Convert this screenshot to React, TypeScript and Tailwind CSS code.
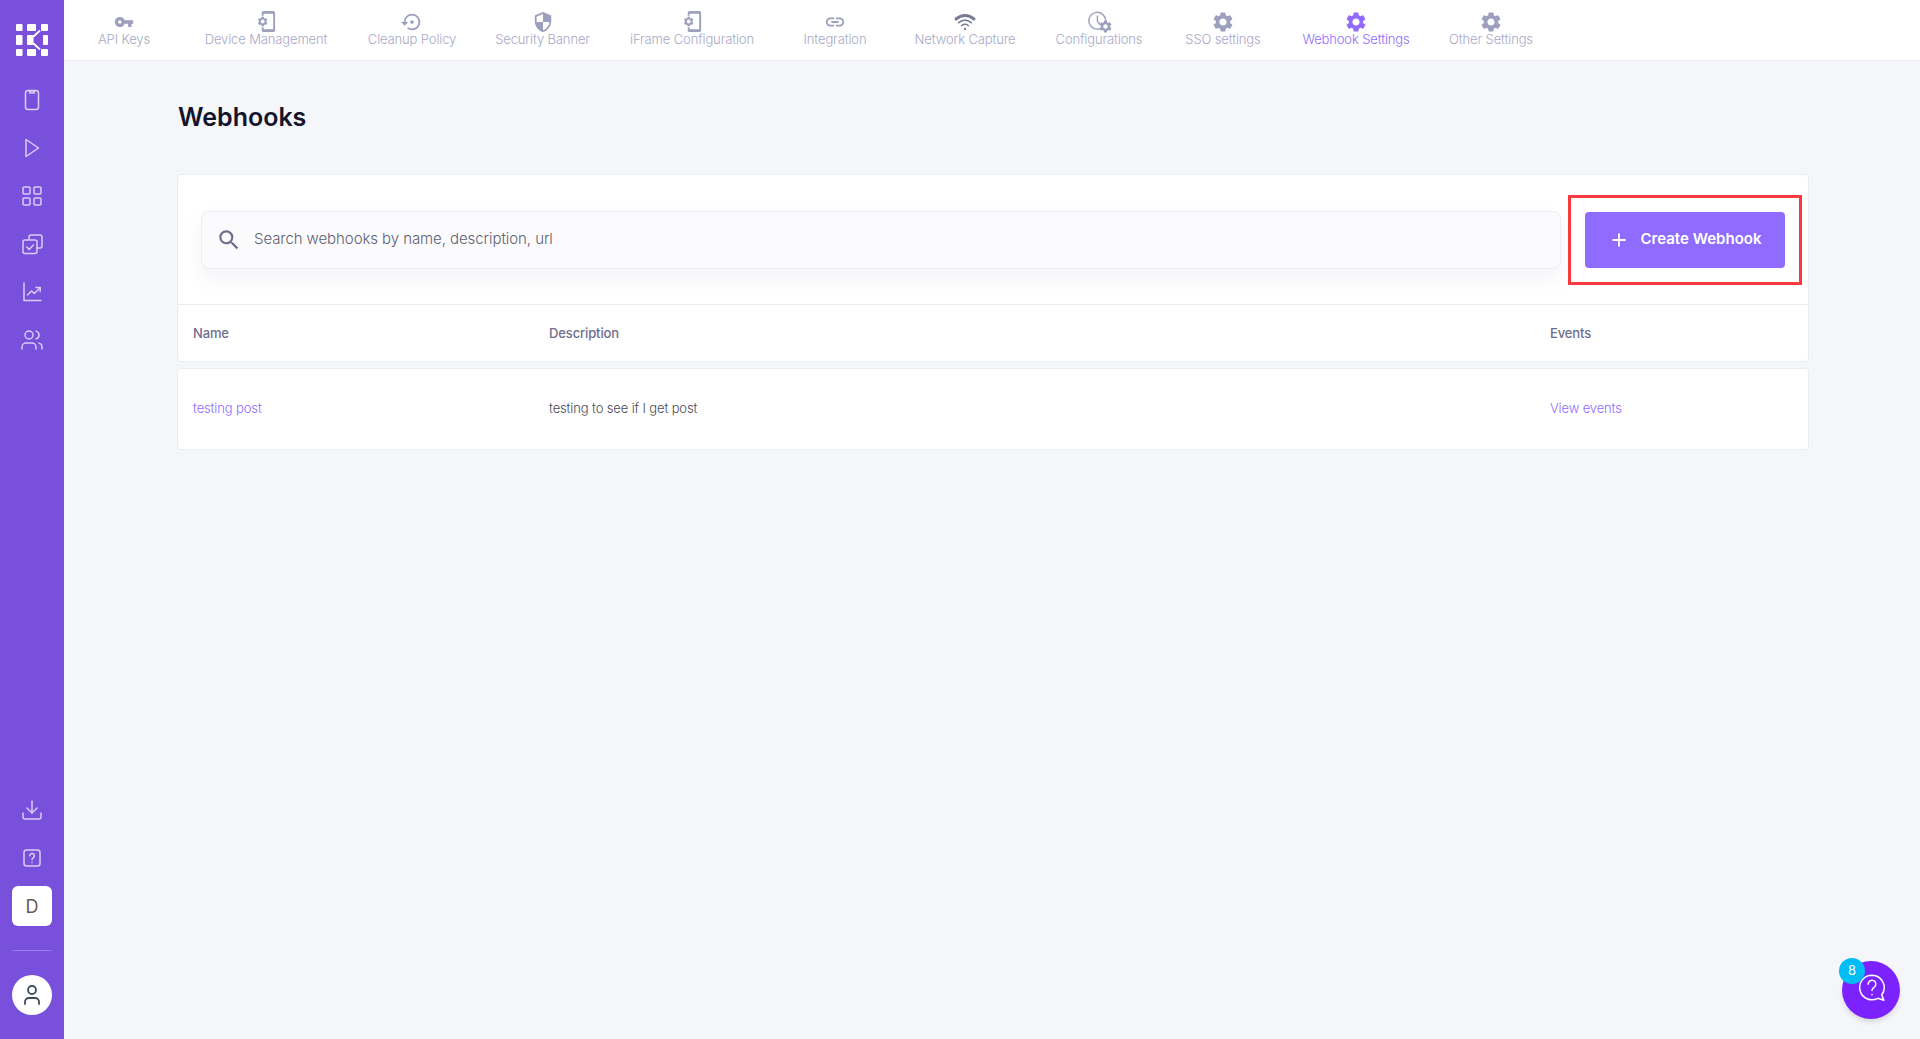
import { Download, LayoutGrid, Plus, User, Users } from 'lucide-react';
import {
  MdLink,
  MdOutlinePhonelinkSetup,
  MdSearch,
  MdSecurity,
  MdSettings,
  MdSettingsBackupRestore,
  MdVpnKey,
} from 'react-icons/md';
import type { ReactNode } from 'react';

const font = "font-['Inter','Liberation_Sans',sans-serif]";

function ClockGear() {
  return (
    <div className="relative h-6 w-6">
      <svg viewBox="0 0 24 24" className="h-6 w-6 text-[#9c9fbd]" fill="none" stroke="currentColor" strokeWidth="1.4">
        <path d="M13 18.6A8.4 8.4 0 1 1 18.6 10.6M10.4 5.5v6l2.8 3.2" />
      </svg>
      <MdSettings className="absolute bottom-0 -right-0.5 h-[15px] w-[15px] text-[#9c9fbd]" />
    </div>
  );
}

function WifiIcon() {
  return (
    <svg viewBox="0 0 24 24" className="h-6 w-6 text-[#777b95]" fill="none" stroke="currentColor" strokeLinecap="round">
      <path d="M3 9C8.5 4.4 15.5 4.4 21 9" strokeWidth="3" />
      <path d="M5.8 12.6c3.8-3 8.6-3 12.4 0" strokeWidth="1.8" />
      <path d="M8.6 15.6c2.1-1.6 4.7-1.6 6.8 0" strokeWidth="1.5" />
      <circle cx="12" cy="19" r="1.2" fill="currentColor" stroke="none" />
    </svg>
  );
}

const tabs: { label: string; width: string; icon: ReactNode; active?: boolean }[] = [
  { label: 'API Keys', width: 'w-[120px]', icon: <MdVpnKey className="h-5 w-5 text-[#9c9fbd]" /> },
  { label: 'Device Management', width: 'w-[164px]', icon: <MdOutlinePhonelinkSetup className="h-[23px] w-[23px] text-[#9c9fbd]" /> },
  { label: 'Cleanup Policy', width: 'w-[128px]', icon: <MdSettingsBackupRestore className="h-[22px] w-[22px] text-[#9c9fbd]" /> },
  { label: 'Security Banner', width: 'w-[133px]', icon: <MdSecurity className="h-[22px] w-[22px] text-[#9c9fbd]" /> },
  { label: 'iFrame Configuration', width: 'w-[166px]', icon: <MdOutlinePhonelinkSetup className="h-[23px] w-[23px] text-[#9c9fbd]" /> },
  { label: 'Integration', width: 'w-[120px]', icon: <MdLink className="h-[22px] w-[22px] text-[#9c9fbd]" /> },
  { label: 'Network Capture', width: 'w-[140px]', icon: <WifiIcon /> },
  { label: 'Configurations', width: 'w-[128px]', icon: <ClockGear /> },
  { label: 'SSO settings', width: 'w-[120px]', icon: <MdSettings className="h-6 w-6 text-[#9c9fbd]" /> },
  { label: 'Webhook Settings', width: 'w-[146px]', icon: <MdSettings className="h-6 w-6 text-[#8f6bff]" />, active: true },
  { label: 'Other Settings', width: 'w-[124px]', icon: <MdSettings className="h-6 w-6 text-[#9c9fbd]" /> },
];

function PhoneIcon() {
  return (
    <svg viewBox="0 0 24 24" className="h-6 w-6" fill="none" stroke="currentColor" strokeWidth="1.5">
      <rect x="5.5" y="2.5" width="13" height="19" rx="2.5" />
      <path d="M9.5 3h5v1.2a.8.8 0 0 1-.8.8h-3.4a.8.8 0 0 1-.8-.8z" />
    </svg>
  );
}

function PlayIcon() {
  return (
    <svg viewBox="0 0 24 24" className="h-6 w-6" fill="none" stroke="currentColor" strokeWidth="1.5" strokeLinejoin="round">
      <path d="M6 3.5L18.5 12 6 20.5z" />
    </svg>
  );
}

function ChartIcon() {
  return (
    <svg viewBox="0 0 24 24" className="h-6 w-6" fill="none" stroke="currentColor" strokeWidth="1.5" strokeLinecap="round" strokeLinejoin="round">
      <path d="M4 3v17.5h17" />
      <path d="M7.5 15l4-4 2.8 2.5L20 8" />
      <path d="M16 7.5h4.2v4" />
    </svg>
  );
}

function CopyCheckIcon() {
  return (
    <svg viewBox="0 0 24 24" className="h-6 w-6" fill="none" stroke="currentColor" strokeWidth="1.5" strokeLinecap="round" strokeLinejoin="round">
      <path d="M9 7V5a2 2 0 0 1 2-2h9a2 2 0 0 1 2 2v9a2 2 0 0 1-2 2h-3" />
      <rect x="3" y="8" width="14" height="13.5" rx="2" />
      <path d="M6.8 15l2.4 2.4 4.2-4.4" />
    </svg>
  );
}

function HelpSquareIcon() {
  return (
    <svg viewBox="0 0 24 24" className="h-6 w-6" fill="none" stroke="currentColor" strokeWidth="1.5" strokeLinecap="round">
      <rect x="4" y="4" width="16" height="16" rx="2.5" />
      <path d="M9.8 9.8a2.3 2.3 0 1 1 3.6 1.9c-.8.5-1.4 1-1.4 2" />
      <path d="M12 16.4v.2" />
    </svg>
  );
}

function Logo() {
  return (
    <svg viewBox="0 0 32 32" className="h-8 w-8" fill="white">
      <rect x="0" y="0" width="6.5" height="7" rx="1" />
      <rect x="11" y="0" width="9" height="7" rx="1" />
      <rect x="25" y="0" width="7" height="7" rx="1" />
      <rect x="0" y="11" width="6.5" height="10" rx="1" />
      <path d="M11 12a1 1 0 0 1 1-1h7l-1.5 3v4l1.5 3h-7a1 1 0 0 1-1-1z" />
      <rect x="27" y="11" width="5" height="10" rx="1" />
      <rect x="0" y="25" width="6.5" height="7" rx="1" />
      <rect x="11" y="25" width="9" height="7" rx="1" />
      <rect x="25" y="25" width="7" height="7" rx="1" />
      <path d="M17.5 12.5L24 6.5M17.5 19.5l6.5 6" stroke="white" strokeWidth="1.8" fill="none" />
    </svg>
  );
}

function SideButton({ children }: { children: ReactNode }) {
  return <div className="flex h-12 w-16 items-center justify-center text-[#d9cdf6]">{children}</div>;
}

function Sidebar() {
  return (
    <aside className="flex h-full w-16 shrink-0 flex-col items-center bg-[#7950dc]">
      <div className="mt-6 mb-5">
        <Logo />
      </div>
      <div className="flex flex-col">
        <SideButton><PhoneIcon /></SideButton>
        <SideButton><PlayIcon /></SideButton>
        <SideButton><LayoutGrid className="h-6 w-6" strokeWidth={1.5} /></SideButton>
        <SideButton><CopyCheckIcon /></SideButton>
        <SideButton><ChartIcon /></SideButton>
        <SideButton><Users className="h-6 w-6" strokeWidth={1.5} /></SideButton>
      </div>
      <div className="mt-auto flex flex-col items-center">
        <SideButton><Download className="h-6 w-6" strokeWidth={1.5} /></SideButton>
        <SideButton><HelpSquareIcon /></SideButton>
        <div className={`mt-1 flex h-10 w-10 items-center justify-center rounded-md bg-white pt-px text-lg text-[#6b5a55] ${font}`}>D</div>
        <div className="mt-6 h-px w-10 bg-white/25" />
        <div className="mt-6 mb-6 flex h-10 w-10 items-center justify-center rounded-full bg-white text-[#3e4a5c]">
          <User className="h-6 w-6" strokeWidth={1.8} />
        </div>
      </div>
    </aside>
  );
}

function TopNav() {
  return (
    <nav className="flex h-[61px] shrink-0 border-b border-[#ebecf1] bg-white">
      {tabs.map((t) => (
        <div key={t.label} className={`flex shrink-0 flex-col items-center ${t.width}`}>
          <div className="flex h-[30px] items-center pt-[13px]">{t.icon}</div>
          <span className={`whitespace-nowrap text-[13px] leading-[18px] font-light tracking-[-0.01em] ${t.active ? 'text-[#8f6bff]' : 'text-[#a8a9c8]'}`}>
            {t.label}
          </span>
        </div>
      ))}
    </nav>
  );
}

export default function App() {
  return (
    <div className={`flex h-[1039px] w-full overflow-hidden bg-[#f5f6fa] ${font}`}>
      <Sidebar />
      <div className="flex min-w-0 flex-1 flex-col">
        <TopNav />
        <main className="pl-[113px] pr-[111px]">
          <h1 className="ml-px mt-10 text-[25px] leading-[32px] font-semibold text-[#14142b]">Webhooks</h1>
          <div className="mt-[41px] rounded-sm border border-[#ebecf1] bg-white">
            <div className="flex h-[130px] items-center border-b border-[#ebecf1] pl-[23px] pr-1.5">
              <div className="flex h-[58px] flex-1 items-center rounded-lg border border-[#ebecf5] bg-[#fbfbfd] pl-[14px] shadow-[0_10px_20px_rgba(120,120,160,0.08)]">
                <MdSearch className="h-[26px] w-[26px] text-[#6e6e8c]" />
                <span className="ml-3 text-[15px] font-light tracking-[-0.005em] text-[#5f6072]">Search webhooks by name, description, url</span>
              </div>
              <div className="ml-[7px] flex h-[90px] w-[234px] shrink-0 items-center justify-center border-[3px] border-[#f83a3f]">
                <button className="flex h-14 w-[200px] items-center justify-center gap-3 rounded bg-[#8f6bff] text-[15px] font-semibold text-white">
                  <Plus className="h-5 w-5" strokeWidth={2.2} />
                  Create Webhook
                </button>
              </div>
            </div>
            <div className="grid h-[56px] grid-cols-[356px_1001px_1fr] items-center px-[15px] pt-px text-[13px] font-medium tracking-[-0.01em] text-[#6e6e8c]">
              <span>Name</span>
              <span>Description</span>
              <span>Events</span>
            </div>
          </div>
          <div className="mt-1.5 grid h-[82px] grid-cols-[356px_1001px_1fr] items-center rounded-sm border border-[#ebecf1] bg-white px-[15px] text-[13px] font-light tracking-[-0.01em]">
            <span className="text-[#8f6bff]">testing post</span>
            <span className="text-[#4a4a55]">testing to see if I get post</span>
            <span className="text-[#8f6bff]">View events</span>
          </div>
        </main>
      </div>
      <div className="absolute left-[1842px] top-[961px] flex h-[58px] w-[58px] items-center justify-center rounded-full bg-[#7b22ff] shadow-md">
        <svg viewBox="0 0 28 28" className="-mt-1 ml-0.5 h-[30px] w-[30px]" fill="none" stroke="white" strokeWidth="1.4" strokeLinecap="round" strokeLinejoin="round">
          <path d="M14 2a11.5 11.5 0 1 0 5.5 21.6l5.5 1.9-1.9-5.2A11.5 11.5 0 0 0 14 2z" />
          <path d="M10.4 10.4a3.6 3.6 0 1 1 5.5 3c-1.2.8-1.9 1.5-1.9 3" />
          <path d="M14 20v.3" />
        </svg>
      </div>
      <div className="absolute left-[1839px] top-[958px] flex h-[26px] w-[26px] items-center justify-center rounded-full bg-[#00bcf5] text-[13px] text-white">8</div>
    </div>
  );
}
